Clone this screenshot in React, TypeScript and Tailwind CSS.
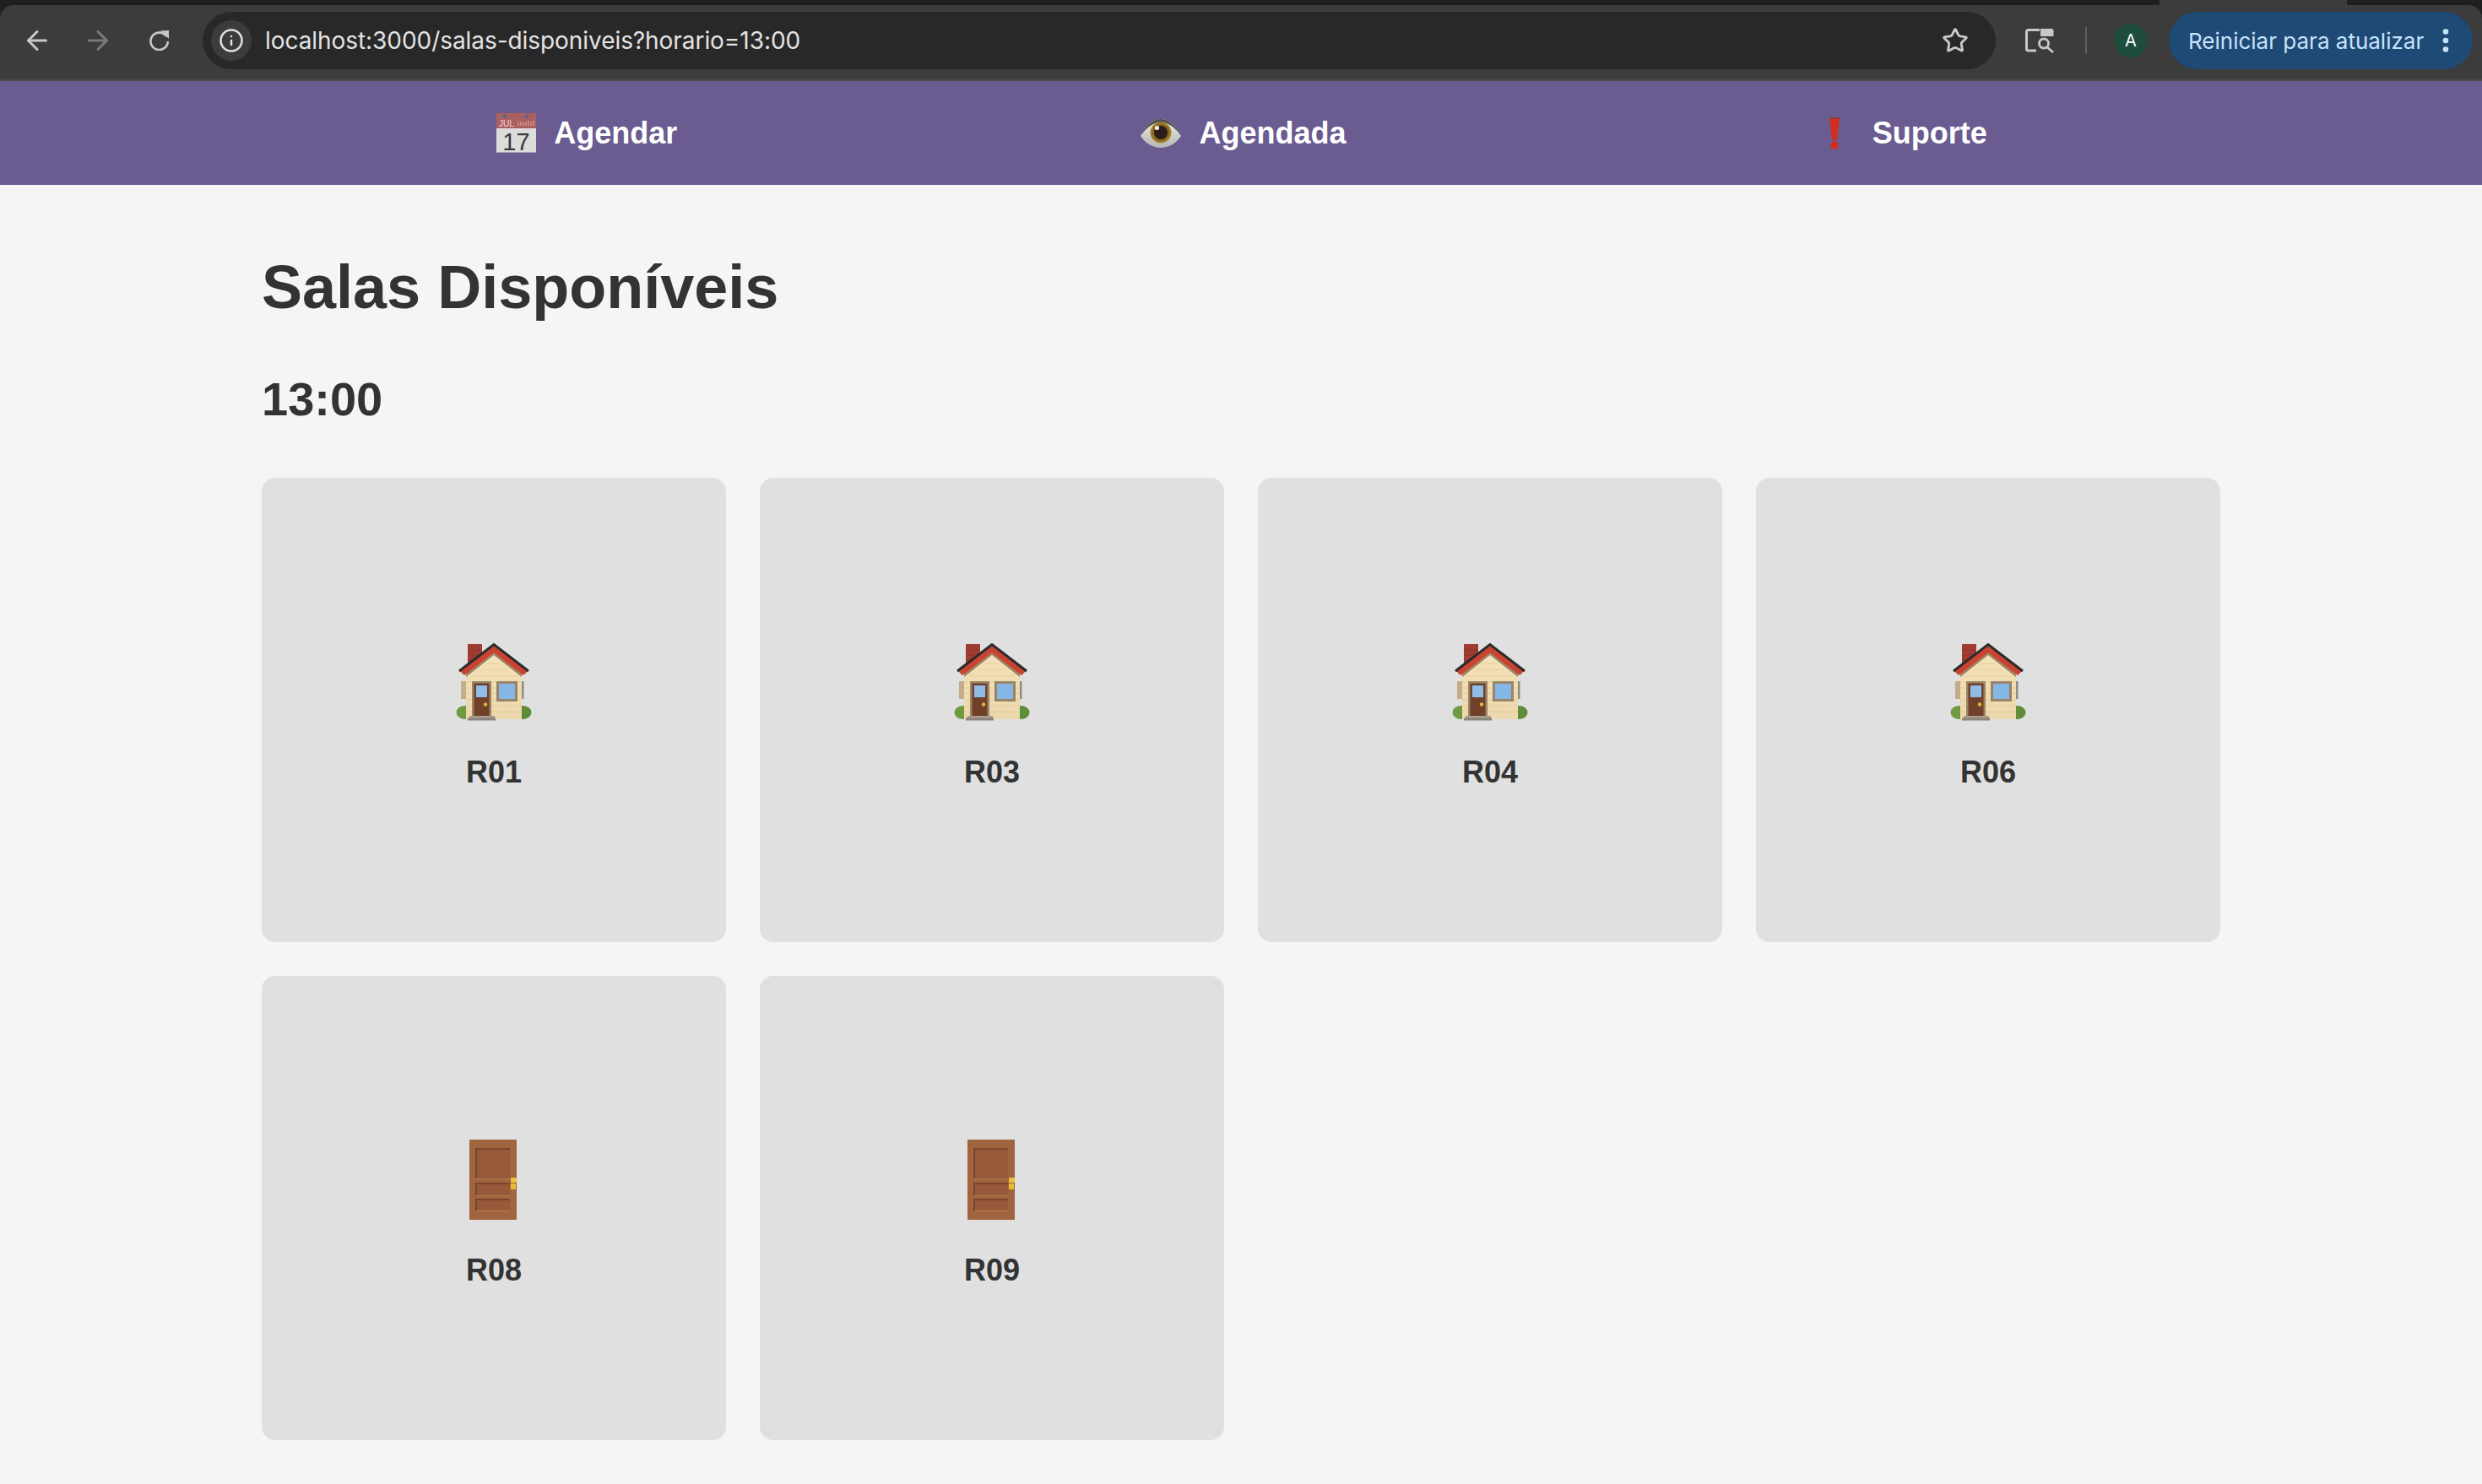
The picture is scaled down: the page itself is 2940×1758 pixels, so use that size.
/**
 * SalasDisponiveis – room picker page for one time slot, shown inside a browser window.
 */
import { ArrowLeft, ArrowRight, Info, Star, EllipsisVertical } from 'lucide-react';
import type { ReactNode } from 'react';

const SANS = 'font-["Liberation_Sans",Arial,sans-serif]';

function CalendarIcon() {
  return (
    <svg viewBox="0 0 47 47" className="h-[47px] w-[47px] overflow-visible">
      <rect x="0" y="0" width="47" height="47" fill="#dcdcdc" />
      <rect x="0" y="0" width="47" height="18" fill="#ab5f5e" />
      <rect x="0" y="46" width="47" height="1" fill="#a9a6b8" />
      <circle cx="10" cy="4" r="2.4" fill="#5a6590" />
      <circle cx="36" cy="4" r="2.4" fill="#5a6590" />
      <text x="3" y="16" fontSize="10" fontWeight="normal" fill="#f2dede" fontFamily="Liberation Sans, sans-serif">JUL</text>
      <path d="M26 15V11M29 15V10M32 15V11M35 15V10M38 15V9M41 15V10M44 15V9" stroke="#d9a3a0" strokeWidth="1.2" />
      <text x="23.5" y="44" fontSize="29" fontWeight="normal" textAnchor="middle" fill="#3a3a3a" fontFamily="Liberation Sans, sans-serif">17</text>
    </svg>
  );
}

function EyeIcon() {
  return (
    <svg viewBox="0 0 48 34" className="h-[34px] w-[48px] blur-[0.3px]">
      <defs>
        <linearGradient id="eye-white" x1="0" y1="0" x2="0" y2="1">
          <stop offset="0%" stopColor="#f0f0ee" />
          <stop offset="100%" stopColor="#b5b5b2" />
        </linearGradient>
        <radialGradient id="eye-iris" cx="50%" cy="50%" r="50%">
          <stop offset="0%" stopColor="#5e4220" />
          <stop offset="70%" stopColor="#86601f" />
          <stop offset="100%" stopColor="#a98a2e" />
        </radialGradient>
      </defs>
      <path d="M0 20 C6 7 15 0 24 0 C33 0 42 7 48 20 C42 29 33 34 24 34 C15 34 6 29 0 20 Z" fill="url(#eye-white)" />
      <path d="M0 20 C6 7 15 0 24 0 C33 0 42 7 48 20 C41 10 33 4 24 4 C15 4 7 10 0 20 Z" fill="#55524f" />
      <circle cx="24" cy="16" r="12.5" fill="url(#eye-iris)" />
      <circle cx="24" cy="16" r="8" fill="#2a1d1a" />
      <circle cx="19.5" cy="10.5" r="2.6" fill="#f6f3ec" />
    </svg>
  );
}

function ExclamationIcon() {
  return (
    <svg viewBox="0 0 12 38" className="h-[38px] w-[12px] blur-[0.3px]">
      <path d="M0 0 H12 L9 27 H3 Z" fill="#d32d20" />
      <path d="M0 0 H12 L11.8 2 H0.2 Z" fill="#8f3a3c" />
      <circle cx="6" cy="33.2" r="4.8" fill="#d32d20" />
    </svg>
  );
}

function HouseIcon() {
  return (
    <svg viewBox="0 0 90 92" className="h-[92px] w-[90px] blur-[0.4px]">
      <defs>
        <linearGradient id="house-wall" x1="0" y1="0" x2="0" y2="1">
          <stop offset="0%" stopColor="#f4e2b8" />
          <stop offset="100%" stopColor="#ecd8ac" />
        </linearGradient>
      </defs>
      <rect x="14" y="1" width="17" height="28" rx="1" fill="#a03c32" />
      <path d="M14 8h17M14 14h17M14 20h17" stroke="#8a332b" strokeWidth="0.8" />
      <ellipse cx="11" cy="82" rx="10.5" ry="8" fill="#6f9a42" />
      <ellipse cx="79" cy="82" rx="10.5" ry="8" fill="#5f8c38" />
      <rect x="6" y="45" width="6" height="21" fill="#c4ad8a" />
      <rect x="78" y="45" width="2.5" height="21" fill="#8f8c80" />
      <path d="M12 36 L45 10 L78 36 V90 H12 Z" fill="url(#house-wall)" />
      <path d="M12 46h66M12 53h66M12 60h66M12 67h66M12 74h66M12 81h66M18 39h54M28 31h34M36 24h18" stroke="#dcc596" strokeWidth="0.7" />
      <path d="M12 36 L45 10 L78 36 V40 L45 14 L12 40 Z" fill="#9c8468" />
      <rect x="19" y="45" width="23" height="41" fill="#9a8468" />
      <rect x="21.5" y="47.5" width="18" height="38.5" fill="#71402a" />
      <rect x="24" y="50" width="13" height="14" fill="#8fbde6" />
      <circle cx="35" cy="72.5" r="2.2" fill="#e6b53a" />
      <rect x="48" y="45" width="25" height="24" fill="#9a8468" />
      <rect x="51" y="48" width="19" height="18" fill="#84b6e6" />
      <rect x="16" y="86" width="30" height="3" fill="#a89c8c" />
      <rect x="14" y="88.5" width="33" height="3" fill="#8a847c" />
      <path d="M5 33 L45 3 L85 33 L80 38 L45 11 L10 38 Z" fill="#cb4230" />
      <path d="M4 33 L45 1.5 L86 33" stroke="#2b2b2b" strokeWidth="3" fill="none" />
    </svg>
  );
}

function DoorIcon() {
  return (
    <svg viewBox="0 0 58 96" className="h-[96px] w-[58px] blur-[0.3px]">
      <rect x="0" y="0" width="56" height="95" rx="1" fill="#a0643f" />
      <rect x="8" y="10" width="40" height="36" fill="#96593a" />
      <rect x="8" y="51" width="40" height="15" fill="#96593a" />
      <rect x="8" y="70" width="40" height="14" fill="#96593a" />
      <path d="M8 11H48M8 52H48M8 71H48M8 10V46M8 51V66M8 70V84" stroke="#70402a" strokeWidth="1.6" fill="none" />
      <path d="M8 46.5H48M8 66.5H48M8 84.5H48" stroke="#b57a52" strokeWidth="1.2" />
      <rect x="49" y="45" width="7" height="6" rx="1" fill="#e8c23c" />
      <rect x="49" y="52" width="6" height="7" fill="#e4bc38" />
    </svg>
  );
}

// Chrome's "search this tab" button
function CastIcon() {
  return (
    <svg viewBox="0 0 35 29" className="h-[29px] w-[35px]" fill="none">
      <path d="M17 1.5 H4 Q1.5 1.5 1.5 4 V24 Q1.5 26 4 26 H13" stroke="#c8c8c8" strokeWidth="3" />
      <path d="M18 0 H31 Q33.5 0 33.5 2.5 V9 H18 Z" fill="#c8c8c8" />
      <circle cx="22" cy="17.5" r="5.5" stroke="#c8c8c8" strokeWidth="2.8" />
      <path d="M26 22 L33 28" stroke="#c8c8c8" strokeWidth="2.8" />
    </svg>
  );
}

function ReloadIcon() {
  return (
    <svg viewBox="0 0 24 24" className="h-[24px] w-[24px]" fill="none">
      <path d="M21 7 A10.2 10.2 0 1 0 22.8 13" stroke="#c8c8c8" strokeWidth="2.6" />
      <path d="M14 0.5 L24 0 V10 Z" fill="#c8c8c8" />
    </svg>
  );
}

function BrowserBar() {
  return (
    <div className="h-[96px] bg-[#1f1f1f]">
      <div className="ml-[2558px] h-[6px] w-[222px] bg-[#3c3c3c]" />
      <div className="flex h-[90px] items-start rounded-t-[16px] border-b-[2px] border-[#4a4a4a] bg-[#3c3c3c] pt-[8px] font-['Inter',sans-serif]">
        <div className="flex h-[68px] w-[240px] shrink-0 items-center">
          <ArrowLeft className="ml-[26px] h-[36px] w-[36px] text-[#c8c8c8]" strokeWidth={2} />
          <ArrowRight className="ml-[36px] h-[36px] w-[36px] text-[#7a7a7a]" strokeWidth={2} />
          <div className="ml-[42px]"><ReloadIcon /></div>
        </div>
        <div className="flex h-[68px] w-[2124px] shrink-0 items-center rounded-full bg-[#282828] pl-[10px] pr-[32px]">
          <div className="flex h-[48px] w-[48px] items-center justify-center rounded-full bg-[#3c3c3c]">
            <Info className="h-[30px] w-[30px] text-[#e0e0e0]" strokeWidth={2} />
          </div>
          <span className="ml-[16px] text-[28px] tracking-[-0.06px] text-[#e3e3e3]">localhost:3000/salas-disponiveis?horario=13:00</span>
          <Star className="ml-auto h-[32px] w-[32px] text-[#c8c8c8]" strokeWidth={2.2} />
        </div>
        <div className="flex h-[68px] flex-1 items-center">
          <div className="ml-[35px]"><CastIcon /></div>
          <div className="ml-[36px] h-[32px] w-[2px] bg-[#5f5f5f]" />
          <div className="ml-[32px] flex h-[40px] w-[40px] items-center justify-center rounded-full bg-[#1e4d3e] text-[20px] text-white">A</div>
          <div className="ml-[25px] flex h-[68px] w-[360px] items-center rounded-full bg-[#1f4a75] pl-[23px] text-[#c7e3fc]">
            <span className="text-[26px]">Reiniciar para atualizar</span>
            <EllipsisVertical className="ml-auto mr-[14px] h-[36px] w-[36px]" strokeWidth={2.4} />
          </div>
        </div>
      </div>
    </div>
  );
}

function NavItem({ icon, label }: { icon: ReactNode; label: string }) {
  return (
    <a className="flex items-center justify-center gap-[20px] text-[36px] font-bold text-white">
      <span className="flex w-[50px] justify-center">{icon}</span>
      {label}
    </a>
  );
}

const ROOMS = [
  { name: 'R01', kind: 'house' },
  { name: 'R03', kind: 'house' },
  { name: 'R04', kind: 'house' },
  { name: 'R06', kind: 'house' },
  { name: 'R08', kind: 'door' },
  { name: 'R09', kind: 'door' },
];

function RoomCard({ name, kind }: { name: string; kind: string }) {
  return (
    <div className="flex h-[550px] flex-col items-center justify-center rounded-[16px] bg-[#e0e0e0] pt-[12px]">
      <div className="flex h-[100px] items-center">{kind === 'house' ? <HouseIcon /> : <DoorIcon />}</div>
      <span className="mt-[36px] text-[36px] leading-[42px] font-bold text-[#333]">{name}</span>
    </div>
  );
}

export default function App() {
  return (
    <div className={`min-h-[1758px] bg-[#f5f5f5] ${SANS}`}>
      <BrowserBar />
      <nav className="bg-[#6a5c90]">
        <div className="mx-auto grid h-[123px] w-[2340px] grid-cols-3 items-center pl-[5px]">
          <NavItem icon={<CalendarIcon />} label="Agendar" />
          <NavItem icon={<EyeIcon />} label="Agendada" />
          <NavItem icon={<ExclamationIcon />} label="Suporte" />
        </div>
      </nav>
      <main className="px-[310px] pt-[80px]">
        <h1 className="text-[72px] leading-[83px] font-bold text-[#333]">Salas Disponíveis</h1>
        <h2 className="mt-[59px] text-[56px] leading-[64px] font-bold text-[#333]">13:00</h2>
        <div className="mt-[61px] grid grid-cols-4 gap-[40px]">
          {ROOMS.map((r) => (
            <RoomCard key={r.name} name={r.name} kind={r.kind} />
          ))}
        </div>
      </main>
    </div>
  );
}
